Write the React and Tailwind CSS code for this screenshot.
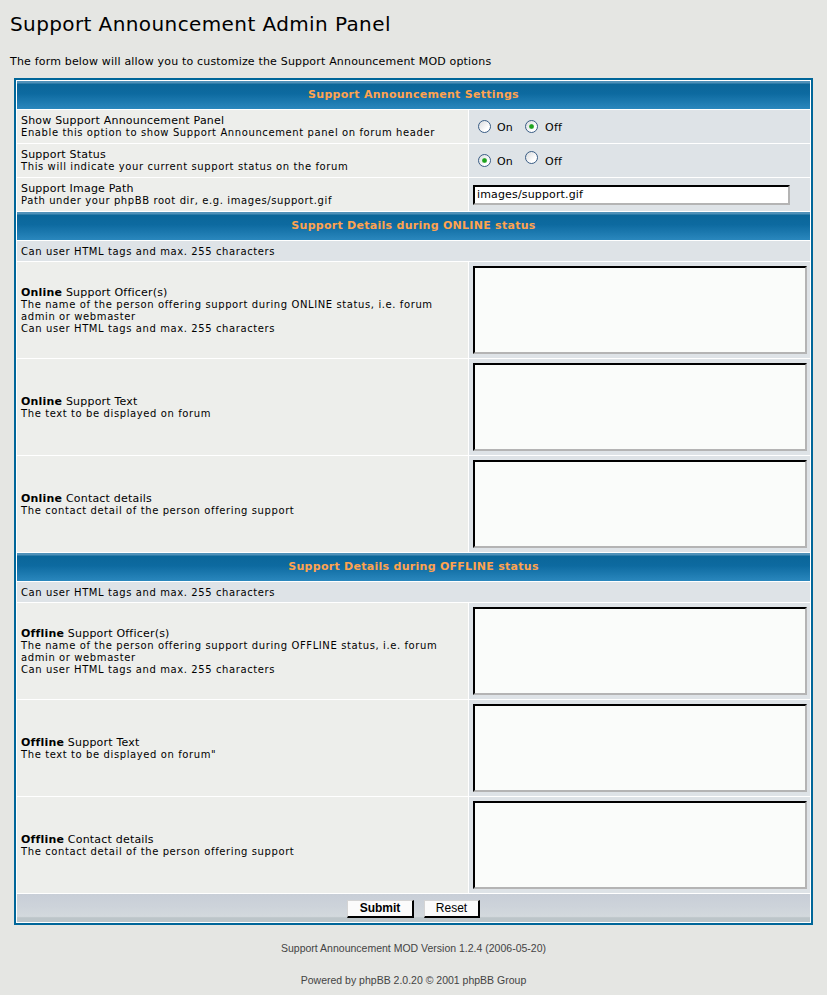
import React from 'react';

const font = "font-['DejaVu_Sans',Verdana,sans-serif]";

function Radio({ checked }) {
    return (
        <span className="inline-flex items-center justify-center w-[13px] h-[13px] rounded-full border border-[#3a5d85] bg-[linear-gradient(135deg,#d8dadc,#ffffff_70%)]">
            {checked && <span className="w-[5px] h-[5px] rounded-full bg-[radial-gradient(circle,#1fa31f_40%,#8fd28f_100%)]" />}
        </span>
    );
}

function RadioPair({ on }) {
    return (
        <div className="flex items-center text-[11px] tracking-[0.2px] text-black pl-[5px]">
            <Radio checked={on} />
            <span className="ml-[6px] mt-[3px]">On</span>
            <span className="ml-[12px]"><Radio checked={!on} /></span>
            <span className="ml-[7px] mt-[3px]">Off</span>
        </div>
    );
}

function Header({ children }) {
    return (
        <tr>
            <th
                colSpan={2}
                className="h-[28px] p-0 text-center text-[11px] tracking-[0.28px] font-bold text-[#ffa34f] bg-[linear-gradient(to_bottom,#4f91b9_0px,#4f91b9_2px,#0b6699_3px,#0d6aa0_45%,#2a87bd_100%)]"
            >
                {children}
            </th>
        </tr>
    );
}

function Note() {
    return (
        <tr>
            <td colSpan={2} className="h-[20px] px-[4px] py-0 bg-[#dee3e7] text-[10px] tracking-[0.6px] text-black">
                Can user HTML tags and max. 255 characters
            </td>
        </tr>
    );
}

function TextRow({ bold, title, lines }) {
    return (
        <tr>
            <td className="h-[96px] px-[4px] py-0 bg-[#edeeeb] align-middle">
                <div className="text-[11px] leading-[13px] tracking-[0.2px] text-black"><b>{bold}</b> {title}</div>
                {lines.map((l, i) => (
                    <div key={i} className="text-[10px] leading-[12px] tracking-[0.6px] text-black">{l}</div>
                ))}
            </td>
            <td className="h-[96px] p-[4px] bg-[#dee3e7] align-middle">
                <div className="w-[334px] h-[88px] bg-[#fafcfa] border-2 border-t-black border-l-black border-r-[#b4b4b4] border-b-[#b4b4b4]" />
            </td>
        </tr>
    );
}

function SettingRow({ title, desc, children }) {
    return (
        <tr>
            <td className="h-[33px] px-[4px] py-0 bg-[#edeeeb] align-middle">
                <div className="text-[11px] leading-[13px] tracking-[0.2px] text-black">{title}</div>
                <div className="text-[10px] leading-[12px] tracking-[0.6px] text-black">{desc}</div>
            </td>
            <td className="h-[33px] px-[4px] py-0 bg-[#dee3e7] align-middle">{children}</td>
        </tr>
    );
}

export default function App() {
    return (
        <div className={`min-h-[995px] bg-[#e5e6e3] ${font} pt-[12px]`}>
            <h1 className="ml-[10px] text-[20px] leading-[24px] tracking-[0.4px] text-black font-normal">Support Announcement Admin Panel</h1>
            <p className="ml-[10px] mt-[19px] text-[11px] leading-[13px] tracking-[0.18px] text-black">
                The form below will allow you to customize the Support Announcement MOD options
            </p>

            <table className="mt-[10px] ml-[14px] w-[799px] table-fixed border-separate border-spacing-[1px] bg-white border-2 border-[#006699]">
                <colgroup>
                    <col className="w-[451px]" />
                    <col className="w-[341px]" />
                </colgroup>
                <tbody>
                    <Header>Support Announcement Settings</Header>
                    <SettingRow
                        title="Show Support Announcement Panel"
                        desc="Enable this option to show Support Announcement panel on forum header"
                    >
                        <RadioPair on={false} />
                    </SettingRow>
                    <SettingRow
                        title="Support Status"
                        desc="This will indicate your current support status on the forum"
                    >
                        <RadioPair on={true} />
                    </SettingRow>
                    <SettingRow
                        title="Support Image Path"
                        desc="Path under your phpBB root dir, e.g. images/support.gif"
                    >
                        <div className="w-[317px] h-[20px] bg-white border-2 border-t-black border-l-black border-r-[#b4b4b4] border-b-[#b4b4b4] text-[11px] leading-[16px] tracking-[0.15px] pl-[2px] text-black">
                            images/support.gif
                        </div>
                    </SettingRow>

                    <Header>Support Details during ONLINE status</Header>
                    <Note />
                    <TextRow
                        bold="Online"
                        title="Support Officer(s)"
                        lines={[
                            'The name of the person offering support during ONLINE status, i.e. forum admin or webmaster',
                            'Can user HTML tags and max. 255 characters',
                        ]}
                    />
                    <TextRow bold="Online" title="Support Text" lines={['The text to be displayed on forum']} />
                    <TextRow bold="Online" title="Contact details" lines={['The contact detail of the person offering support']} />

                    <Header>Support Details during OFFLINE status</Header>
                    <Note />
                    <TextRow
                        bold="Offline"
                        title="Support Officer(s)"
                        lines={[
                            'The name of the person offering support during OFFLINE status, i.e. forum admin or webmaster',
                            'Can user HTML tags and max. 255 characters',
                        ]}
                    />
                    <TextRow bold="Offline" title="Support Text" lines={['The text to be displayed on forum"']} />
                    <TextRow bold="Offline" title="Contact details" lines={['The contact detail of the person offering support']} />

                    {/* catBottom */}
                    <tr>
                        <td
                            colSpan={2}
                            className="h-[28px] p-0 bg-[linear-gradient(to_bottom,#c8ced7_0%,#cdd3da_45%,#d3d9dd_80%,#bcc5c9_85%,#bcc5c9_100%)]"
                        >
                            <div className="flex justify-center gap-[10px] pt-[1px]">
                                <button className="w-[67px] h-[18px] bg-[#fbfbfb] border border-t-[#d4d4d4] border-l-[#d4d4d4] border-r-black border-b-black border-r-2 border-b-2 text-[12px] leading-[14px] font-bold text-black font-['Liberation_Sans',Arial,sans-serif]">
                                    Submit
                                </button>
                                <button className="w-[56px] h-[18px] bg-[#fbfbfb] border border-t-[#d4d4d4] border-l-[#d4d4d4] border-r-black border-b-black border-r-2 border-b-2 text-[12px] leading-[14px] text-black font-['Liberation_Sans',Arial,sans-serif]">
                                    Reset
                                </button>
                            </div>
                        </td>
                    </tr>
                </tbody>
            </table>

            <div className="font-['Liberation_Sans',Arial,sans-serif] text-[10.5px] text-[#444444] text-center">
                <p className="mt-[16px] leading-[14px]">Support Announcement MOD Version 1.2.4 (2006-05-20)</p>
                <p className="mt-[18px] leading-[14px]">Powered by phpBB 2.0.20 &copy; 2001 phpBB Group</p>
            </div>
        </div>
    );
}
